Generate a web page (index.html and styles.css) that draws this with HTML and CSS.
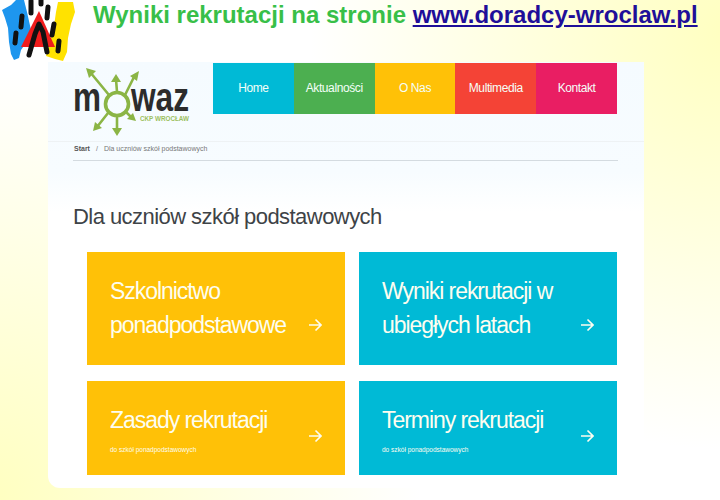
FILE: index.html
```html
<!DOCTYPE html>
<html lang="pl">
<head>
  <meta charset="UTF-8">
  <title>Wyniki rekrutacji</title>
  <link rel="stylesheet" href="styles.css">
</head>
<body>

  <header class="slide-head">
    <svg class="paint-logo" width="76" height="62" viewBox="0 0 76 62">
      <path d="M2 10 L11 5 L16 0 L24 0 L27 12 L31 30 L26 43 L21 50 L19 58 L14 60 L11 54 L9 42 L8 28 L5 18 Z" fill="#1e96ee"/>
      <path d="M58 2 L73 2 L75 12 L71 24 L68 38 L67 52 L63 61 L55 59 L46 56 L50 42 L54 26 L56 12 Z" fill="#ffe200"/>
      <path d="M39 11 L55 47 L21 47 Z" fill="#f01c1c"/>
      <path d="M29 55 L35 34 L39 24 L43 32 L47 52" fill="none" stroke="#111" stroke-width="5" stroke-linecap="round" stroke-linejoin="round"/>
      <path d="M31 1 L31 13 M41 0 L41 4 M48 7 L47 18 M22 16 L21 27 M16 33 L15 43 M54 24 L52 35 M59 41 L58 51" fill="none" stroke="#111" stroke-width="5" stroke-linecap="round"/>
    </svg>
    <h1 class="slide-title">Wyniki rekrutacji na stronie <a href="#">www.doradcy-wroclaw.pl</a></h1>
  </header>

  <main class="shot">
    <div class="site-top">
      <svg class="site-logo" width="165" height="79" viewBox="48 62 165 79">
        <g fill="none" stroke="#8bb545" stroke-width="2.6">
          <circle cx="117" cy="104" r="11.5" stroke-width="3.6"/>
          <path d="M109 95 L90 72 M117 92 L116 79 M125 95 L135 75 M108 113 L97 127 M117 116 L117 131 M126 112 L132 118"/>
        </g>
        <g fill="#8bb545">
          <path d="M86 68 L96 71 L89 78 Z"/>
          <path d="M116 74 L121 82 L111 82 Z"/>
          <path d="M139 71 L137 81 L130 76 Z"/>
          <path d="M93 131 L95 122 L102 128 Z"/>
          <path d="M117 136 L112 128 L122 128 Z"/>
          <path d="M136 121 L127 119 L133 113 Z"/>
        </g>
        <g class="logo-word">
          <text x="73" y="111" textLength="28" lengthAdjust="spacingAndGlyphs">m</text>
          <text x="131" y="111" textLength="58" lengthAdjust="spacingAndGlyphs">waz</text>
        </g>
        <text class="logo-sub" x="140" y="121" textLength="49" lengthAdjust="spacingAndGlyphs">CKP WROCŁAW</text>
      </svg>
      <nav class="site-nav">
        <a class="nav-item bg-cyan" href="#">Home</a>
        <a class="nav-item bg-green" href="#">Aktualności</a>
        <a class="nav-item bg-amber" href="#">O Nas</a>
        <a class="nav-item bg-red" href="#">Multimedia</a>
        <a class="nav-item bg-pink" href="#">Kontakt</a>
      </nav>
    </div>

    <div class="crumbs">
      <span class="crumbs-inner"><b>Start</b><i>/</i>Dla uczniów szkół podstawowych</span>
    </div>

    <h2 class="page-title">Dla uczniów szkół podstawowych</h2>

    <div class="tiles">
      <a class="tile bg-amber" href="#">
        <span class="tile-title">Szkolnictwo<br>ponadpodstawowe</span>
        <svg class="tile-arrow low" width="14" height="14" viewBox="0 0 14 14"><path d="M1 7 H13 M7.5 1.5 L13 7 L7.5 12.5"/></svg>
      </a>
      <a class="tile bg-cyan" href="#">
        <span class="tile-title">Wyniki rekrutacji w<br>ubiegłych latach</span>
        <svg class="tile-arrow low" width="14" height="14" viewBox="0 0 14 14"><path d="M1 7 H13 M7.5 1.5 L13 7 L7.5 12.5"/></svg>
      </a>
      <a class="tile bg-amber" href="#">
        <span class="tile-text"><span class="tile-title">Zasady rekrutacji</span><small>do szkół ponadpodstawowych</small></span>
        <svg class="tile-arrow" width="14" height="14" viewBox="0 0 14 14"><path d="M1 7 H13 M7.5 1.5 L13 7 L7.5 12.5"/></svg>
      </a>
      <a class="tile bg-cyan" href="#">
        <span class="tile-text"><span class="tile-title">Terminy rekrutacji</span><small>do szkół ponadpodstawowych</small></span>
        <svg class="tile-arrow" width="14" height="14" viewBox="0 0 14 14"><path d="M1 7 H13 M7.5 1.5 L13 7 L7.5 12.5"/></svg>
      </a>
    </div>
  </main>

</body>
</html>
```

FILE: styles.css
```css
body {
  margin: 0;
  width: 720px;
  height: 500px;
  overflow: hidden;
  font-family: "Liberation Sans", Arial, sans-serif;
  background:
    radial-gradient(circle at 730px 30px, #ffffc0 0, rgba(255, 255, 192, 0) 420px),
    radial-gradient(circle at -10px 500px, #ffffc0 0, rgba(255, 255, 192, 0) 430px),
    #ffffff;
}

a {
  color: inherit;
  text-decoration: none;
}

.slide-head {
  display: flex;
  height: 62px;
}

.paint-logo {
  flex: none;
  filter: blur(0.6px);
}

.slide-title {
  margin: 0 0 0 17px;
  font-size: 24px;
  line-height: 30px;
  white-space: nowrap;
  color: #38bf48;
}

.slide-title a {
  color: #1f0f99;
  text-decoration: underline;
}

.shot {
  margin-left: 48px;
  width: 596px;
  height: 426px;
  border-radius: 0 0 0 12px;
  background: linear-gradient(to bottom, #f5fbff 0, #f7fcff 110px, #ffffff 150px);
}

.site-top {
  display: flex;
  height: 79px;
}

.site-logo {
  flex: none;
  overflow: visible;
}

.logo-word {
  font-size: 40px;
  font-weight: bold;
  fill: #2c2c2c;
}

.logo-sub {
  font-size: 7px;
  font-weight: bold;
  fill: #9cc060;
}

.site-nav {
  display: flex;
  width: 404px;
  height: 51px;
  margin-top: 1px;
}

.nav-item {
  flex: 1;
  display: flex;
  align-items: center;
  justify-content: center;
  padding-bottom: 1px;
  font-size: 12px;
  letter-spacing: -0.4px;
  color: #f4fff8;
}

.bg-cyan { background: #00bad6; }
.bg-green { background: #4caf50; }
.bg-amber { background: #ffc107; }
.bg-red { background: #f44336; }
.bg-pink { background: #e91e63; }

.crumbs {
  border-top: 1px solid #eef2f4;
  height: 19px;
  padding-left: 25px;
}

.crumbs-inner {
  display: block;
  box-sizing: border-box;
  width: 545px;
  height: 19px;
  border-bottom: 1px solid #d4dbe0;
  padding-left: 1px;
  font-size: 7px;
  line-height: 13px;
  color: #777;
}

.crumbs-inner b {
  color: #555;
}

.crumbs-inner i {
  margin: 0 6px;
  font-style: normal;
}

.page-title {
  margin: 43px 0 0 25px;
  font-size: 22px;
  line-height: 26px;
  font-weight: normal;
  letter-spacing: -0.55px;
  color: #3e4347;
}

.tiles {
  display: grid;
  grid-template-columns: 258px 258px;
  grid-template-rows: 113px 94px;
  column-gap: 14px;
  row-gap: 16px;
  margin: 22px 0 0 39px;
}

.tile {
  display: flex;
  justify-content: space-between;
  align-items: flex-start;
  padding: 22px 23px 0 23px;
  color: #fdfdf0;
}

.tile-text {
  display: block;
}

.tile-title {
  display: block;
  font-size: 23px;
  line-height: 34px;
  letter-spacing: -1.05px;
}

.tile small {
  display: block;
  margin-top: 9px;
  font-size: 6.5px;
  line-height: 8px;
}

.tile-arrow {
  flex: none;
  margin-top: 26px;
  fill: none;
  stroke: #fdfdf0;
  stroke-width: 1.6;
}

.tile-arrow.low {
  margin-top: 44px;
}
```
